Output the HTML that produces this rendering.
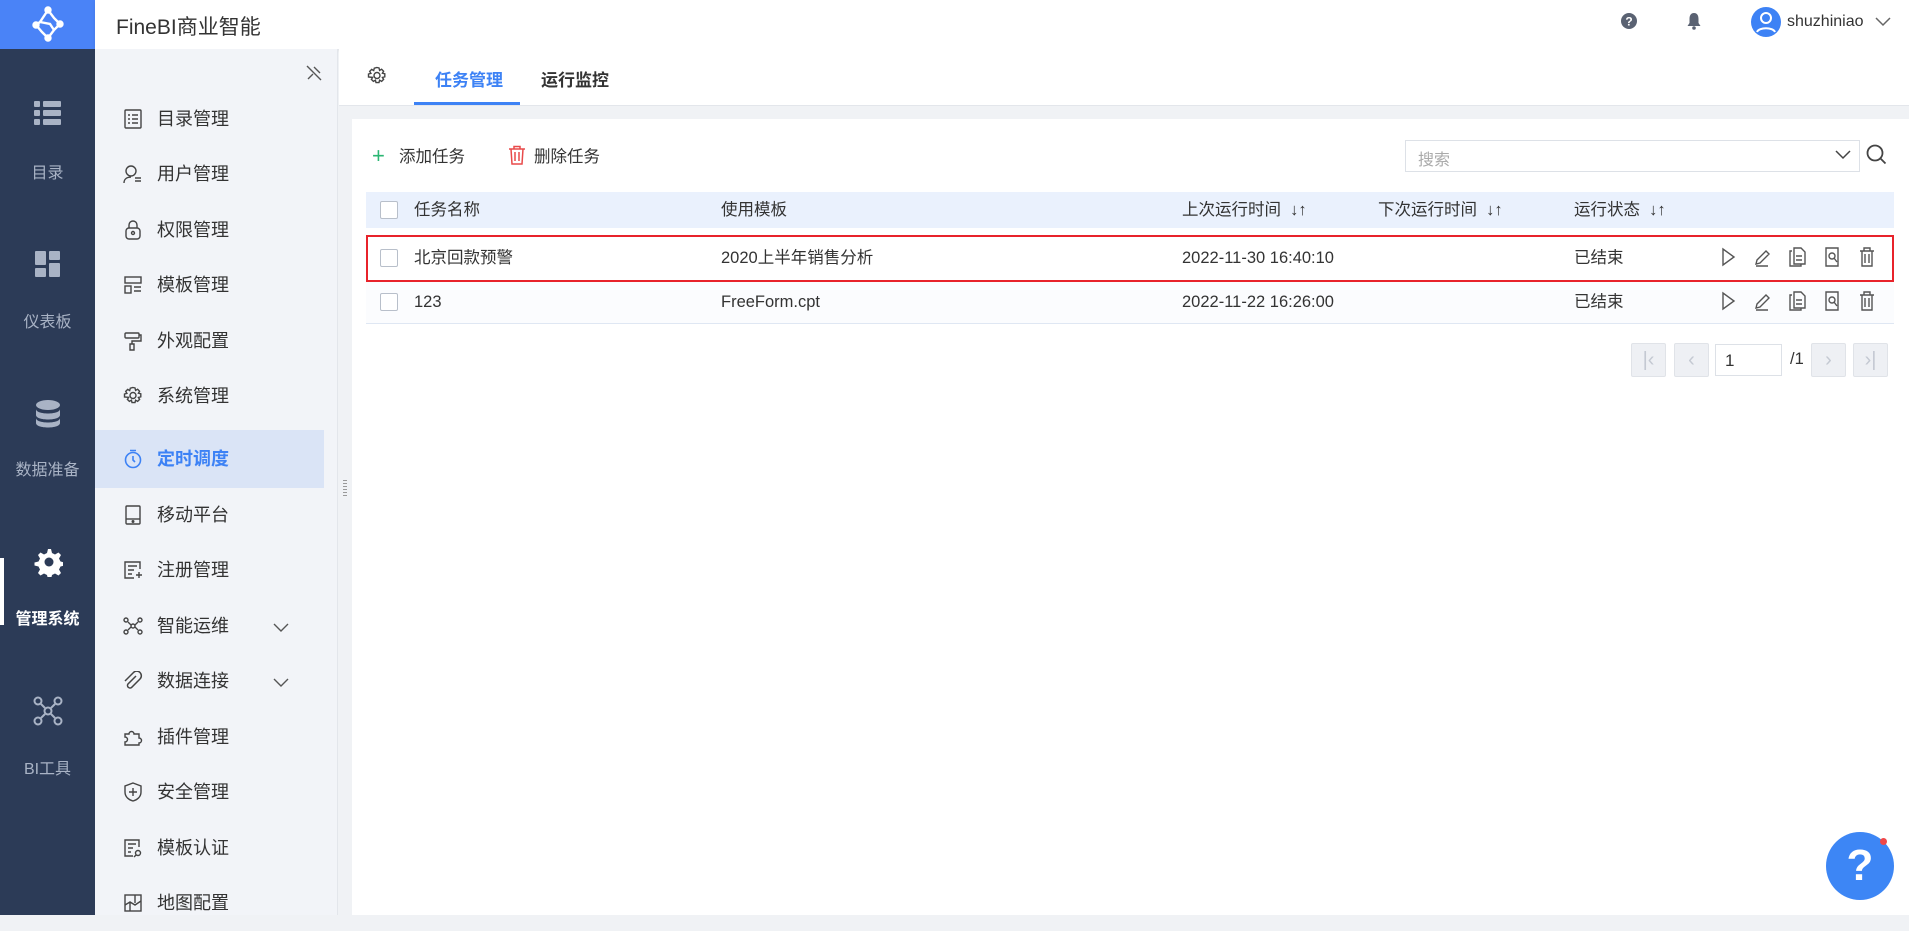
<!DOCTYPE html>
<html><head><meta charset="utf-8"><style>
*{margin:0;padding:0;box-sizing:border-box}
body{width:1909px;height:915px;overflow:hidden;position:relative;font-family:"Liberation Sans","Noto Sans CJK SC",sans-serif;background:#f0f2f5;color:#333}
.a{position:absolute}
.nav{left:0;top:0;width:95px;height:915px;background:#2c3b57}
.logo{left:0;top:0;width:95px;height:49px;background:#4a83f7}
.top{left:95px;top:0;width:1814px;height:49px;background:#fff;box-shadow:0 1px 4px rgba(0,0,0,.08)}
.nl{width:95px;text-align:center;color:#a9b3c5;font-size:16px}
.side{left:95px;top:49px;width:243px;height:866px;background:#f2f4f8;border-right:1px solid #e3e6eb}
.mi{left:0;width:243px;height:55px;font-size:18px;color:#333;line-height:55px}
.mi span{position:absolute;left:62px}
.mi svg{position:absolute;left:28px;top:17px}
.tabs{left:339px;top:49px;width:1570px;height:57px;background:#fff;border-bottom:1px solid #e3e6eb}
.card{left:352px;top:119px;width:1557px;height:796px;background:#fff}
.cb{width:18px;height:18px;border:1px solid #b8bfca;border-radius:2px;background:#fff}
.t{font-size:16.5px;color:#333;white-space:nowrap;line-height:22px}
.pg{width:35px;height:34px;background:#eef0f4;border:1px solid #e0e3e8;border-radius:2px;color:#c4c9d2;text-align:center;line-height:32px;font-size:20px}
</style></head><body>
<div class="a nav"></div>
<div class="a logo"><svg class="a" style="left:30px;top:6px" width="36" height="36" viewBox="0 0 36 36" fill="none" stroke="#fff" stroke-width="2.4"><path d="M18 4 L10 16 L6 19 L12 26 L18 32 M18 4 L24 12 L30 18 L24 24 L18 32 M10 16 L20 18 L24 24"/><circle cx="18" cy="4" r="2.5" fill="#fff"/><circle cx="6" cy="19" r="2.5" fill="#fff"/><circle cx="30" cy="18" r="2.5" fill="#fff"/><circle cx="18" cy="32" r="2.5" fill="#fff"/></svg></div>
<div class="a top"><div class="a" style="left:21px;top:11px;font-size:21px;color:#333">FineBI商业智能</div>
<svg class="a" style="left:1525px;top:12px" width="18" height="18"><circle cx="9" cy="9" r="8" fill="#5a6272"/><text x="9" y="13.5" text-anchor="middle" font-size="12" font-weight="bold" fill="#fff" font-family="Liberation Sans">?</text></svg>
<svg class="a" style="left:1591px;top:12px" width="16" height="18" viewBox="0 0 16 18"><path d="M8 1C4.5 1 3.5 4 3.5 7v4L1.5 14h13l-2-3V7C12.5 4 11.5 1 8 1z" fill="#5a6272"/><circle cx="8" cy="16" r="1.8" fill="#5a6272"/></svg>
<svg class="a" style="left:1655px;top:6px" width="32" height="32"><circle cx="16" cy="16" r="15" fill="#3d82f5"/><circle cx="16" cy="12" r="5" fill="none" stroke="#fff" stroke-width="2"/><path d="M7 26c2-5 16-5 18 0" fill="none" stroke="#fff" stroke-width="2"/></svg>
<div class="a" style="left:1692px;top:13px;font-size:16px;color:#333">shuzhiniao</div>
<svg class="a" style="left:1780px;top:17px" width="16" height="10"><path d="M1 1l7 7 7-7" fill="none" stroke="#666" stroke-width="1.5"/></svg>
</div>
<!-- left nav -->
<svg class="a" style="left:34px;top:101px" width="27" height="24" viewBox="0 0 27 24" fill="#a9b3c5"><rect x="0" y="0" width="6" height="6" rx="1"/><rect x="9" y="0" width="18" height="6" rx="1"/><rect x="0" y="9" width="6" height="6" rx="1"/><rect x="9" y="9" width="18" height="6" rx="1"/><rect x="0" y="18" width="6" height="6" rx="1"/><rect x="9" y="18" width="18" height="6" rx="1"/></svg>
<div class="a nl" style="top:159px">目录</div>
<svg class="a" style="left:35px;top:251px" width="25" height="26" fill="#a9b3c5"><rect x="0" y="0" width="11" height="14" rx="1"/><rect x="14" y="0" width="11" height="9" rx="1"/><rect x="0" y="17" width="11" height="9" rx="1"/><rect x="14" y="12" width="11" height="14" rx="1"/></svg>
<div class="a nl" style="top:308px">仪表板</div>
<svg class="a" style="left:35px;top:400px" width="26" height="28" fill="#a9b3c5"><ellipse cx="13" cy="5" rx="12" ry="5"/><path d="M1 9c0 6 24 6 24 0v6c0 6-24 6-24 0z"/><path d="M1 18c0 6 24 6 24 0v5c0 6-24 6-24 0z"/></svg>
<div class="a nl" style="top:456px">数据准备</div>
<div class="a" style="left:0;top:558px;width:4px;height:67px;background:#fff"></div>
<svg class="a" style="left:33px;top:547px" width="30" height="30" viewBox="0 0 30 30"><path d="M15 2l3 0 1 4 3 1.5 3.5-2 2.5 2.5-2 3.5 1.5 3 4 1v3l-4 1-1.5 3 2 3.5-2.5 2.5-3.5-2-3 1.5-1 4h-3l-1-4-3-1.5-3.5 2-2.5-2.5 2-3.5-1.5-3-4-1v-3l4-1 1.5-3-2-3.5 2.5-2.5 3.5 2 3-1.5z" fill="#fff"/><circle cx="16" cy="15" r="4.5" fill="#2c3b57"/></svg>
<div class="a nl" style="top:605px;color:#fff;font-weight:bold">管理系统</div>
<svg class="a" style="left:33px;top:696px" width="30" height="30" fill="none" stroke="#a9b3c5" stroke-width="2"><circle cx="5" cy="5" r="3.5"/><circle cx="25" cy="5" r="3.5"/><circle cx="5" cy="25" r="3.5"/><circle cx="25" cy="25" r="3.5"/><circle cx="15" cy="15" r="3.5"/><path d="M8 8l4 4M22 8l-4 4M8 22l4-4M22 22l-4-4"/></svg>
<div class="a nl" style="top:755px">BI工具</div>
<!-- side menu -->
<div class="a side">
<svg class="a" style="left:210px;top:15px" width="18" height="18" fill="none" stroke="#555" stroke-width="1.4"><path d="M3 15l5-5M6 6l6 6M9 3l6 6M2 2l14 14"/></svg>
<div class="a mi" style="top:43px"><svg width="20" height="20" fill="none" stroke="#444" stroke-width="1.4"><rect x="2" y="1" width="16" height="18" rx="1"/><path d="M5 6h2M9 6h6M5 10h2M9 10h6M5 14h2M9 14h6"/></svg><span>目录管理</span></div>
<div class="a mi" style="top:98px"><svg width="20" height="20" fill="none" stroke="#444" stroke-width="1.4"><circle cx="8" cy="7" r="5"/><path d="M1 19c0-4 3-6 7-6M12 14h6M12 17h6"/></svg><span>用户管理</span></div>
<div class="a mi" style="top:154px"><svg width="20" height="20" fill="none" stroke="#444" stroke-width="1.4"><rect x="3" y="8" width="14" height="11" rx="3"/><path d="M6 8V5a4 4 0 018 0v3"/><circle cx="10" cy="13" r="1.5"/></svg><span>权限管理</span></div>
<div class="a mi" style="top:209px"><svg width="20" height="20" fill="none" stroke="#444" stroke-width="1.4"><rect x="2" y="2" width="16" height="6"/><rect x="2" y="11" width="6" height="7"/><path d="M11 12h7M11 16h7"/></svg><span>模板管理</span></div>
<div class="a mi" style="top:265px"><svg width="20" height="20" fill="none" stroke="#444" stroke-width="1.4"><rect x="2" y="2" width="14" height="5" rx="1"/><path d="M16 4h2v6H9v3M7 13h4v6H7z"/></svg><span>外观配置</span></div>
<div class="a mi" style="top:320px"><svg width="20" height="20" fill="none" stroke="#444" stroke-width="1.4"><path d="M10 1.5l2 .5.6 2.4 2-1.2 2 2-1.2 2 2.4.6v3l-2.4.6 1.2 2-2 2-2-1.2-.6 2.4h-3l-.6-2.4-2 1.2-2-2 1.2-2L1.5 11V8l2.4-.6-1.2-2 2-2 2 1.2.6-2.4z"/><circle cx="10" cy="9.5" r="3"/></svg><span>系统管理</span></div>
<div class="a mi" style="top:381px;width:229px;height:58px;background:#dae4f6;color:#3d82f5;font-weight:bold;line-height:58px"><svg width="20" height="20" fill="none" stroke="#3d82f5" stroke-width="1.6" style="top:19px"><circle cx="10" cy="11" r="7.5"/><path d="M10 7v4l2 2M7 1.5h6"/></svg><span>定时调度</span></div>
<div class="a mi" style="top:439px"><svg width="20" height="20" fill="none" stroke="#444" stroke-width="1.4"><rect x="3" y="1" width="14" height="18" rx="1"/><path d="M3 14h14"/><circle cx="10" cy="16.5" r=".8" fill="#444"/></svg><span>移动平台</span></div>
<div class="a mi" style="top:494px"><svg width="20" height="20" fill="none" stroke="#444" stroke-width="1.4"><path d="M17 9V2H2v16h9M5 6h9M5 10h6M5 14h4M13 15h6M16 12v6"/></svg><span>注册管理</span></div>
<div class="a mi" style="top:550px"><svg width="20" height="20" fill="none" stroke="#444" stroke-width="1.4"><circle cx="3" cy="4" r="2"/><circle cx="17" cy="4" r="2"/><circle cx="3" cy="16" r="2"/><circle cx="17" cy="16" r="2"/><circle cx="10" cy="10" r="2"/><path d="M5 6l3 3M15 6l-3 3M5 14l3-3M15 14l-3-3"/></svg><span>智能运维</span><svg width="16" height="10" style="left:178px;top:24px"><path d="M1 1l7 7 7-7" fill="none" stroke="#555" stroke-width="1.4"/></svg></div>
<div class="a mi" style="top:605px"><svg width="20" height="20" fill="none" stroke="#444" stroke-width="1.5"><path d="M13 5L5 13a2.5 2.5 0 003.5 3.5L17 8a4.5 4.5 0 00-6.5-6.5L2 10"/></svg><span>数据连接</span><svg width="16" height="10" style="left:178px;top:24px"><path d="M1 1l7 7 7-7" fill="none" stroke="#555" stroke-width="1.4"/></svg></div>
<div class="a mi" style="top:661px"><svg width="20" height="20" fill="none" stroke="#444" stroke-width="1.4"><path d="M2 7h4a2.5 2.5 0 015 0h5v4a2.5 2.5 0 010 5v2H2v-3a2.5 2.5 0 000-5z"/></svg><span>插件管理</span></div>
<div class="a mi" style="top:716px"><svg width="20" height="20" fill="none" stroke="#444" stroke-width="1.4"><path d="M10 1l8 3v6c0 5-4 8-8 9-4-1-8-4-8-9V4z"/><path d="M10 6v8M6 10h8"/></svg><span>安全管理</span></div>
<div class="a mi" style="top:772px"><svg width="20" height="20" fill="none" stroke="#444" stroke-width="1.4"><path d="M16 9V2H2v16h8M5 6h8M5 10h5M5 14h3"/><circle cx="15" cy="15" r="2.5"/><path d="M13 17l-2 2"/></svg><span>模板认证</span></div>
<div class="a mi" style="top:827px"><svg width="20" height="20" fill="none" stroke="#444" stroke-width="1.4"><rect x="2" y="2" width="16" height="16"/><path d="M2 12l5-3 5 3 6-4M12 2v8M7 9v9"/></svg><span>地图配置</span></div>
</div>
<div class="a" style="left:343px;top:480px;width:4px;height:16px;background:repeating-linear-gradient(#999 0 1px,transparent 1px 3px)"></div>
<!-- tabs -->
<div class="a tabs">
<svg class="a" style="left:28px;top:17px" width="20" height="20" fill="none" stroke="#444" stroke-width="1.4"><path d="M10 1.5l2 .5.6 2.4 2-1.2 2 2-1.2 2 2.4.6v3l-2.4.6 1.2 2-2 2-2-1.2-.6 2.4h-3l-.6-2.4-2 1.2-2-2 1.2-2L1.5 11V8l2.4-.6-1.2-2 2-2 2 1.2.6-2.4z"/><circle cx="10" cy="9.5" r="3"/></svg>
<div class="a" style="left:96px;top:17px;font-size:17px;font-weight:bold;color:#3d82f5">任务管理</div>
<div class="a" style="left:75px;top:53px;width:106px;height:3px;background:#3d82f5"></div>
<div class="a" style="left:202px;top:17px;font-size:17px;font-weight:bold;color:#333">运行监控</div>
</div>
<div class="a card"></div>
<!-- toolbar -->
<div class="a" style="left:372px;top:146px;font-size:22px;color:#2bb673;line-height:20px">+</div>
<div class="a t" style="left:399px;top:146px">添加任务</div>
<svg class="a" style="left:508px;top:145px" width="18" height="20" fill="none" stroke="#e84a4a" stroke-width="1.5"><path d="M1 4h16M6 4V1.5h6V4M3 4l1 15h10l1-15M7 7v9M11 7v9"/></svg>
<div class="a t" style="left:534px;top:146px">删除任务</div>
<div class="a" style="left:1405px;top:140px;width:455px;height:32px;border:1px solid #dde1e7;background:#fff"></div>
<div class="a" style="left:1418px;top:146px;font-size:16px;color:#aaa">搜索</div>
<svg class="a" style="left:1835px;top:150px" width="16" height="10"><path d="M1 1l7 7 7-7" fill="none" stroke="#444" stroke-width="1.5"/></svg>
<svg class="a" style="left:1866px;top:144px" width="22" height="22" fill="none" stroke="#444" stroke-width="1.8"><circle cx="9" cy="9" r="7.5"/><path d="M14.5 14.5l5 5"/></svg>
<!-- table -->
<div class="a" style="left:366px;top:192px;width:1528px;height:36px;background:#eaf1fd"></div>
<div class="a" style="left:366px;top:281px;width:1528px;height:43px;background:#fbfcfe;border-bottom:1px solid #dfe7f3"></div>
<div class="a" style="left:366px;top:235px;width:1528px;height:47px;border:2px solid #e8232b"></div>
<div class="a cb" style="left:380px;top:201px"></div>
<div class="a cb" style="left:380px;top:249px"></div>
<div class="a cb" style="left:380px;top:293px"></div>
<div class="a t" style="left:414px;top:199px">任务名称</div>
<div class="a t" style="left:721px;top:199px">使用模板</div>
<div class="a t" style="left:1182px;top:199px">上次运行时间 &nbsp;↓↑</div>
<div class="a t" style="left:1378px;top:199px">下次运行时间 &nbsp;↓↑</div>
<div class="a t" style="left:1574px;top:199px">运行状态 &nbsp;↓↑</div>
<div class="a t" style="left:414px;top:247px">北京回款预警</div>
<div class="a t" style="left:721px;top:247px">2020上半年销售分析</div>
<div class="a t" style="left:1182px;top:247px">2022-11-30 16:40:10</div>
<div class="a t" style="left:1574px;top:247px">已结束</div>
<div class="a t" style="left:414px;top:291px">123</div>
<div class="a t" style="left:721px;top:291px">FreeForm.cpt</div>
<div class="a t" style="left:1182px;top:291px">2022-11-22 16:26:00</div>
<div class="a t" style="left:1574px;top:291px">已结束</div>
<svg class="a" style="left:1720px;top:246px" width="170" height="80" fill="none" stroke="#555" stroke-width="1.4">
<g id="ic"><path d="M3 3v16l11-8z"/><path d="M36 20h12M36 18l1-4 9-9 3 3-9 9z"/><path d="M72 5h-2v15h11v-2M74 2h7l4 4v12H74zM76 10h6M76 14h6"/><path d="M106 2h12v18h-12z"/><circle cx="112" cy="10" r="3"/><path d="M114 12l3 4"/><path d="M140 5h14M144 5V2h6v3M142 5v15h10V5M145 8v9M149 8v9"/></g>
<use href="#ic" y="44"/>
</svg>
<!-- pagination -->
<div class="a pg" style="left:1631px;top:343px">|‹</div>
<div class="a pg" style="left:1674px;top:343px">‹</div>
<div class="a" style="left:1715px;top:344px;width:67px;height:32px;border:1px solid #dde1e7;background:#fff;font-size:17px;padding:6px 0 0 9px">1</div>
<div class="a t" style="left:1790px;top:348px">/1</div>
<div class="a pg" style="left:1811px;top:343px">›</div>
<div class="a pg" style="left:1853px;top:343px">›|</div>
<!-- help -->
<div class="a" style="left:1826px;top:832px;width:68px;height:68px;border-radius:50%;background:#3d86f5;color:#fff;font-size:44px;font-weight:bold;text-align:center;line-height:68px">?</div>
<div class="a" style="left:1880px;top:838px;width:7px;height:7px;border-radius:50%;background:#f04848"></div>
</body></html>
